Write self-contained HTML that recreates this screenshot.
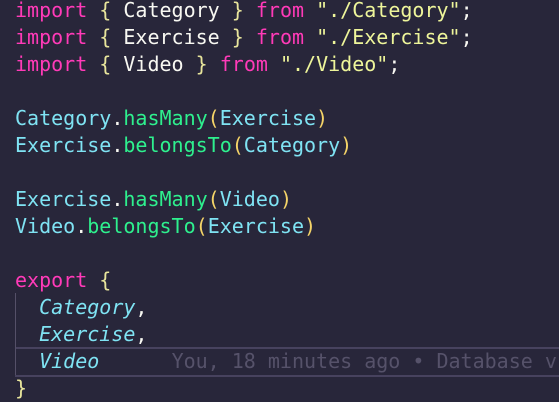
<!DOCTYPE html><html><head><style>
body{margin:0;width:559px;height:401px;background:#28263a;overflow:hidden;font-family:"DejaVu Sans Mono","Liberation Mono",monospace;font-size:20px;}
.c{position:absolute;left:15px;top:-3px;white-space:pre;line-height:27px;color:#f8f8f2}
.k{color:#ff3ab8}.b{color:#e8e59c}.s{color:#eef59a}.t{color:#7fe3f3}.f{color:#2ef08e}.p{color:#f5d468}.i{color:#7fe3f3;font-style:oblique}.g{color:#56526a}
.hl{position:absolute;left:15px;top:347px;width:560px;height:26px;border-top:2px solid #47425e;border-bottom:2px solid #47425e}
.guide{position:absolute;left:15px;top:293px;width:1px;height:82px;background:#555068}
</style></head><body>
<div class="hl"></div><div class="guide"></div>
<div class="c"><span class="k">import</span> <span class="b">{</span> Category <span class="b">}</span> <span class="k">from</span> <span class="s">"./Category"</span>;
<span class="k">import</span> <span class="b">{</span> Exercise <span class="b">}</span> <span class="k">from</span> <span class="s">"./Exercise"</span>;
<span class="k">import</span> <span class="b">{</span> Video <span class="b">}</span> <span class="k">from</span> <span class="s">"./Video"</span>;

<span class="t">Category</span>.<span class="f">hasMany</span><span class="p">(</span><span class="t">Exercise</span><span class="p">)</span>
<span class="t">Exercise</span>.<span class="f">belongsTo</span><span class="p">(</span><span class="t">Category</span><span class="p">)</span>

<span class="t">Exercise</span>.<span class="f">hasMany</span><span class="p">(</span><span class="t">Video</span><span class="p">)</span>
<span class="t">Video</span>.<span class="f">belongsTo</span><span class="p">(</span><span class="t">Exercise</span><span class="p">)</span>

<span class="k">export</span> <span class="b">{</span>
  <span class="i">Category</span>,
  <span class="i">Exercise</span>,
  <span class="i">Video</span>      <span class="g">You, 18 minutes ago • Database v1</span>
<span class="b">}</span></div>
</body></html>
